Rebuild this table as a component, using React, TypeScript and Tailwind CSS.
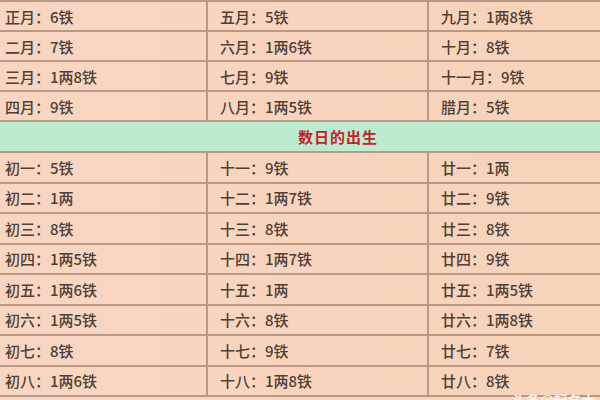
import React from 'react';

const months = [
    ['正月：6铁', '五月：5铁', '九月：1两8铁'],
    ['二月：7铁', '六月：1两6铁', '十月：8铁'],
    ['三月：1两8铁', '七月：9铁', '十一月：9铁'],
    ['四月：9铁', '八月：1两5铁', '腊月：5铁'],
];

const days = [
    ['初一：5铁', '十一：9铁', '廿一：1两'],
    ['初二：1两', '十二：1两7铁', '廿二：9铁'],
    ['初三：8铁', '十三：8铁', '廿三：8铁'],
    ['初四：1两5铁', '十四：1两7铁', '廿四：9铁'],
    ['初五：1两6铁', '十五：1两', '廿五：1两5铁'],
    ['初六：1两5铁', '十六：8铁', '廿六：1两8铁'],
    ['初七：8铁', '十七：9铁', '廿七：7铁'],
    ['初八：1两6铁', '十八：1两8铁', '廿八：8铁'],
];

function Row({ cells, tall }: { cells: string[]; tall?: boolean }) {
    return (
        <div className={`grid grid-cols-[208px_221px_1fr] border-b-2 border-[#b89985] ${tall ? 'h-[30.5px]' : 'h-[30px]'}`}>
            <div className="flex items-center pl-[5px] border-r-2 border-[#b89985]">{cells[0]}</div>
            <div className="flex items-center pl-[12px] border-r-2 border-[#b89985]">{cells[1]}</div>
            <div className="flex items-center pl-[12px]">{cells[2]}</div>
        </div>
    );
}

export default function App() {
    return (
        <div
            className="relative w-[600px] h-[400px] overflow-hidden bg-gradient-to-r from-[#f9d6c2] to-[#f7d3ba] text-[15px] font-medium text-[#4f4036] leading-none"
            style={{ fontFamily: '"Noto Sans CJK SC", "Noto Sans", sans-serif' }}
        >
            <div className="border-t-2 border-[#b89985]">
                {months.map((r, i) => (
                    <Row key={i} cells={r} />
                ))}
                <div className="h-[31px] flex items-center pl-[298px] bg-[#bdebcf] border-b-2 border-[#b89985]">
                    <span className="text-[15px] font-bold tracking-[1px] text-[#c6212b]">数日的出生</span>
                </div>
                {days.map((r, i) => (
                    <Row key={i} cells={r} tall />
                ))}
            </div>
            <span className="absolute left-[512px] top-[393px] text-[14px] text-white/90">头条@起名大师</span>
        </div>
    );
}
